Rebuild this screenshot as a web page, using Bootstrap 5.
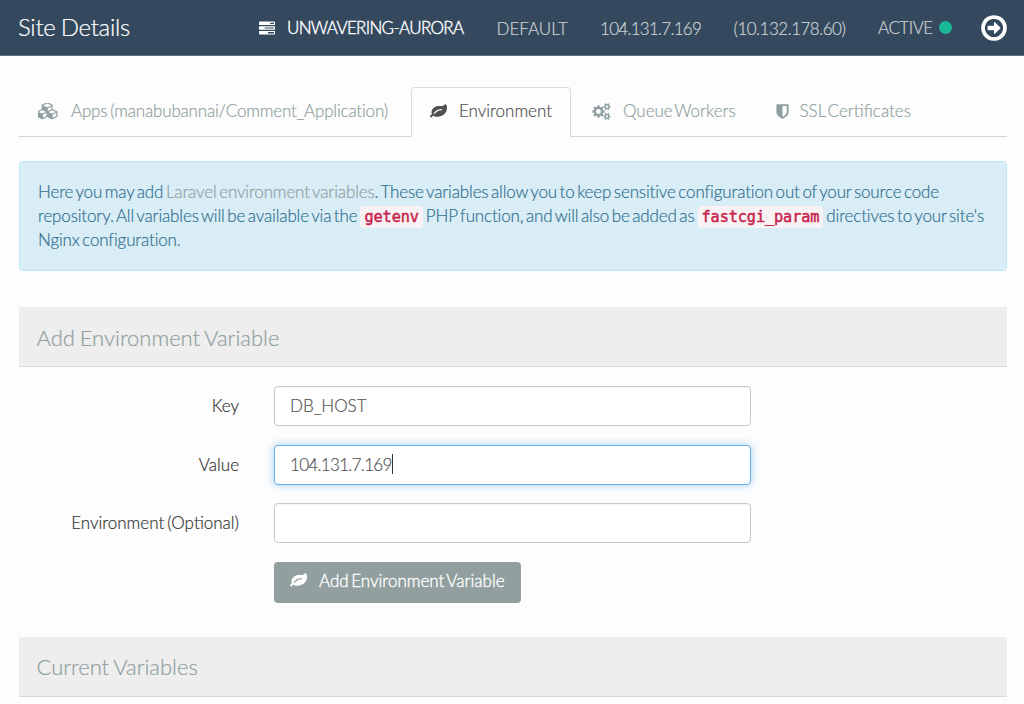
<!DOCTYPE html>
<html lang="en">
<head>
<meta charset="utf-8">
<meta name="viewport" content="width=device-width, initial-scale=1">
<title>Site Details</title>
<link href="https://cdn.jsdelivr.net/npm/bootstrap@5.3.0/dist/css/bootstrap.min.css" rel="stylesheet">
<script src="https://cdn.jsdelivr.net/npm/bootstrap@5.3.0/dist/js/bootstrap.bundle.min.js" defer></script>
<style>
body{font-family:Lato,"Liberation Sans",sans-serif;font-weight:300;font-size:17px;line-height:24px;word-spacing:-2.8px;color:#333;background:#fdfdfd;overflow:hidden;height:704px;-webkit-text-stroke:.2px}
svg{fill:currentColor;display:block;flex:none}
.site-bar{height:56px;background:#34495e;color:#cfd3d5;border-bottom:1px solid #5d6e7e;padding:0 15px 0 18px}
.site-title{font-size:24px;letter-spacing:-.3px;word-spacing:-1px;color:#fff;line-height:54px;width:241px}
.site-meta{line-height:58px}
.site-meta .server{color:#fff;width:229.5px;letter-spacing:-.68px;-webkit-text-stroke:.4px}
.site-meta .group{width:103.5px}
.site-meta .public-ip{width:133.5px;letter-spacing:-.72px}
.site-meta .private-ip{width:144.5px;letter-spacing:-.5px}
.site-meta .state{letter-spacing:-.5px}
.dot{width:13px;height:13px;border-radius:50%;background:#1bb898;margin-left:6px}
.site-body{padding:31px 17px 0 19px}
.nav-tabs{height:50px;border-color:#d3d5d5}
.nav-tabs .nav-link{height:50px;color:#8f9fa0;padding:0 18px 2px;border-radius:4px 4px 0 0;white-space:nowrap}
.nav-tabs .nav-link.active{color:#505050;background:#fdfdfd;border-color:#d9dbdb #d9dbdb #fdfdfd}
.env-note{background:#d9edf7;border:1px solid #bce8f1;color:#31708f;border-radius:4px;height:110px;padding:18px;margin:24px 0 36px;white-space:nowrap;word-spacing:-1.85px;letter-spacing:-.15px}
.env-note a{color:#8f9fa0;text-decoration:none}
.env-note code{background:#f9f2f4;color:#c7254e;border-radius:4px;padding:2px 4px;margin:0 .4px;font:15.2px "DejaVu Sans Mono",monospace;letter-spacing:-.08px;-webkit-text-stroke:.5px}
.section-head{height:60px;background:#eee;border-bottom:1px solid #d8d8d8;font-size:22px;font-weight:300;line-height:61px;word-spacing:-1.2px;color:#8f9fa0;padding-left:17.5px;margin:0}
.env-form{padding:19px 0 34.5px;gap:18.5px}
.env-label{width:220px;text-align:right;margin-right:35px;line-height:39px}
.env-form .form-control{width:477px;height:40px;border:1px solid #c8c8c8;border-radius:4px;padding:0 15px;font-size:17px;font-weight:300;color:#555;line-height:37px;background:#fff;box-shadow:inset 0 1px 1px rgba(0,0,0,.04)}
.env-form .form-control.is-focus{border-color:#66afe9;box-shadow:0 0 8px rgba(102,175,233,.6);letter-spacing:-.68px;padding-bottom:1px}
.caret{width:1px;height:20px;background:#333}
.btn-env{background:#929f9f;color:#fff;width:247px;height:41px;font-size:17px;font-weight:300;border:0;border-radius:4px;margin-left:255px;padding:0 0 3px 16px;white-space:nowrap;word-spacing:-2px;-webkit-text-stroke:.35px}
</style>
</head>
<body>
<header class="site-bar d-flex">
  <div class="site-title">Site Details</div>
  <div class="site-meta d-flex flex-grow-1">
    <div class="server d-flex align-items-center"><svg width="16" height="16" viewBox="0 0 1792 1792"><path fill-rule="evenodd" d="M64 180h1664q64 0 64 64v256q0 64-64 64h-1664q-64 0-64-64v-256q0-64 64-64zM1250 300v150h420v-150zM64 704h1664q64 0 64 64v256q0 64-64 64h-1664q-64 0-64-64v-256q0-64 64-64zM640 830v130h1030v-130zM64 1228h1664q64 0 64 64v256q0 64-64 64h-1664q-64 0-64-64v-256q0-64 64-64zM1000 1350v150h670v-150z"/></svg><span style="margin-left:12px">UNWAVERING-AURORA</span></div>
    <div class="group ps-2">DEFAULT</div>
    <div class="public-ip ps-2">104.131.7.169</div>
    <div class="private-ip ps-2">(10.132.178.60)</div>
    <div class="state d-flex align-items-center ps-2">ACTIVE<span class="dot"></span></div>
  </div>
  <svg class="align-self-center" width="30" height="30" viewBox="0 0 1792 1792" color="#fff"><path d="M1280 896q0 14-9 23l-320 320q-9 9-23 9-13 0-22.500-9.500t-9.500-22.500v-192h-352q-13 0-22.500-9.500t-9.500-22.500v-192q0-13 9.500-22.500t22.500-9.500h352v-192q0-14 9-23t23-9q12 0 24 10l319 319q9 9 9 23zm160 0q0-148-73-273t-198-198-273-73-273 73-198 198-73 273 73 273 198 198 273 73 273-73 198-198 73-273zm224 0q0 209-103 385.500t-279.500 279.500-385.500 103-385.500-103-279.500-279.500-103-385.500 103-385.500 279.500-279.500 385.500-103 385.500 103 279.500 279.500 103 385.500z"/></svg>
</header>

<svg class="d-none">
  <symbol id="leaf" viewBox="0 0 1792 1792"><path d="M1280 704q0-26-19-45t-45-19q-172 0-318 49.500t-259.500 134-235.500 219.500q-19 21-19 45 0 26 19 45t45 19q24 0 45-19 27-24 74-71t67-66q137-124 268.500-176t313.500-52q26 0 45-19t19-45zm512-198q0 95-20 193-46 224-184.500 383t-357.500 268q-214 108-438 108-148 0-286-47-15-5-88-42t-96-37q-16 0-39.500 32t-45 70-52.500 70-60 32q-43 0-63.500-17.500t-45.500-59.500q-2-4-6-11t-5.500-10-3-9.500-1.500-13.500q0-35 31-73.500t68-65.500 68-56 31-48q0-4-14-38t-16-44q-9-51-9-104 0-115 43.500-220t119-184.500 170.500-139 204-95.500q55-18 145-25.500t179.500-9 178.500-6 163.500-24 113.500-56.500l29.500-29.500 29.500-28 27-20 36.500-16 43.500-4.500q39 0 70.500 46t47.500 112 24 124 8 96z"/></symbol>
</svg>

<main class="site-body">
  <ul class="nav nav-tabs flex-nowrap">
    <li class="nav-item"><a href="#" class="nav-link d-flex align-items-center" style="width:392px;letter-spacing:-.18px"><svg width="22" height="17" viewBox="0 0 2304 1792"><path d="M512 1566l384-192v-314l-384 164v342zm-64-454l404-173-404-173-404 173zm1088 454l384-192v-314l-384 164v342zm-64-454l404-173-404-173-404 173zm-448-293l384-165v-266l-384 164v267zm-64-379l441-189-441-189-441 189zm1088 518v416q0 36-19 67t-52 47l-448 224q-25 14-57 14t-57-14l-448-224q-4-2-7-4-2 2-7 4l-448 224q-25 14-57 14t-57-14l-448-224q-33-16-52-47t-19-67v-416q0-38 21.500-70t56.500-48l434-186v-400q0-38 21.500-70t56.500-48l448-192q23-10 50-10t50 10l448 192q35 16 56.500 48t21.500 70v400l434 186q36 16 57 48t21 70z"/></svg><span style="margin-left:11px;word-spacing:-1.500px">Apps (manabubannai/Comment_Application)</span></a></li>
    <li class="nav-item"><a href="#" class="nav-link active d-flex align-items-center" style="width:160px"><svg width="17" height="17"><use href="#leaf"/></svg><span style="margin-left:12px">Environment</span></a></li>
    <li class="nav-item"><a href="#" class="nav-link d-flex align-items-center" style="padding-left:20px;width:183.500px"><svg width="19" height="17" viewBox="0 0 1920 1792"><path d="M896 896q0-106-75-181t-181-75-181 75-75 181 75 181 181 75 181-75 75-181zm768 512q0-52-38-90t-90-38-90 38-38 90q0 53 37.500 90.500t90.500 37.500 90.500-37.500 37.500-90.500zm0-1024q0-52-38-90t-90-38-90 38-38 90q0 53 37.500 90.500t90.500 37.500 90.500-37.500 37.500-90.500zm-384 421v185q0 10-7 19.500t-16 10.500l-155 24q-11 35-32 76 34 48 90 115 7 11 7 20 0 12-7 19-23 30-82.500 89.500t-78.500 59.500q-11 0-21-7l-115-90q-37 19-77 31-11 108-23 155-7 24-30 24h-186q-11 0-20-7.500t-10-17.500l-23-153q-34-10-75-31l-118 89q-7 7-20 7-11 0-21-8-144-133-144-160 0-9 7-19 10-14 41-53t47-61q-23-44-35-82l-152-24q-10-1-17-9.500t-7-19.500v-185q0-10 7-19.500t16-10.500l155-24q11-35 32-76-34-48-90-115-7-11-7-20 0-12 7-20 22-30 82-89t79-59q11 0 21 7l115 90q34-18 77-32 11-108 23-154 7-24 30-24h186q11 0 20 7.500t10 17.500l23 153q34 10 75 31l118-89q8-7 20-7 11 0 21 8 144 133 144 160 0 8-7 19-12 16-42 54t-45 60q23 48 34 82l152 23q10 2 17 10.500t7 19.500zm640 533v140q0 16-149 31-12 27-30 52 51 113 51 138 0 4-4 7-122 71-124 71-8 0-46-47t-52-68q-20 2-30 2t-30-2q-14 21-52 68t-46 47q-2 0-124-71-4-3-4-7 0-25 51-138-18-25-30-52-149-15-149-31v-140q0-16 149-31 13-29 30-52-51-113-51-138 0-4 4-7 4-2 35-20t59-34 30-16q8 0 46 46.500t52 67.500q20-2 30-2t30 2q51-71 92-112l6-2q4 0 124 70 4 3 4 7 0 25-51 138 17 23 30 52 149 15 149 31zm0-1024v140q0 16-149 31-12 27-30 52 51 113 51 138 0 4-4 7-122 71-124 71-8 0-46-47t-52-68q-20 2-30 2t-30-2q-14 21-52 68t-46 47q-2 0-124-71-4-3-4-7 0-25 51-138-18-25-30-52-149-15-149-31v-140q0-16 149-31 13-29 30-52-51-113-51-138 0-4 4-7 4-2 35-20t59-34 30-16q8 0 46 46.500t52 67.500q20-2 30-2t30 2q51-71 92-112l6-2q4 0 124 70 4 3 4 7 0 25-51 138 17 23 30 52 149 15 149 31z"/></svg><span style="margin-left:12px">Queue Workers</span></a></li>
    <li class="nav-item"><a href="#" class="nav-link d-flex align-items-center"><svg width="17" height="17" viewBox="0 0 1792 1792"><path d="M1344 960v-640h-448v1137q119-63 213-137 235-184 235-360zm192-768v768q0 86-33.500 170.500t-83 150-118 127.500-126.500 103-121 77.500-89.500 49.500-42.500 20q-12 6-26 6t-26-6q-16-7-42.500-20t-89.500-49.500-121-77.500-126.500-103-118-127.500-83-150-33.500-170.500v-768q0-26 19-45t45-19h1152q26 0 45 19t19 45z"/></svg><span style="margin-left:9px">SSL Certificates</span></a></li>
  </ul>

  <div class="env-note">Here you may add <a href="#">Laravel environment variables</a>. These variables allow you to keep sensitive configuration out of your source code<br>repository. All variables will be available via the <code>getenv</code> PHP function, and will also be added as <code>fastcgi_param</code> directives to your site's<br>Nginx configuration.</div>

  <h2 class="section-head">Add Environment Variable</h2>
  <form class="env-form d-flex flex-column">
    <div class="d-flex"><label class="env-label">Key</label><div class="form-control">DB_HOST</div></div>
    <div class="d-flex"><label class="env-label">Value</label><div class="form-control is-focus d-flex align-items-center">104.131.7.169<span class="caret"></span></div></div>
    <div class="d-flex"><label class="env-label" style="word-spacing:-1.500px">Environment (Optional)</label><div class="form-control"></div></div>
    <button type="button" class="btn btn-env d-flex align-items-center"><svg width="17" height="17"><use href="#leaf"/></svg><span style="margin-left:12px">Add Environment Variable</span></button>
  </form>
  <h2 class="section-head" style="line-height:59px">Current Variables</h2>
</main>
</body>
</html>
